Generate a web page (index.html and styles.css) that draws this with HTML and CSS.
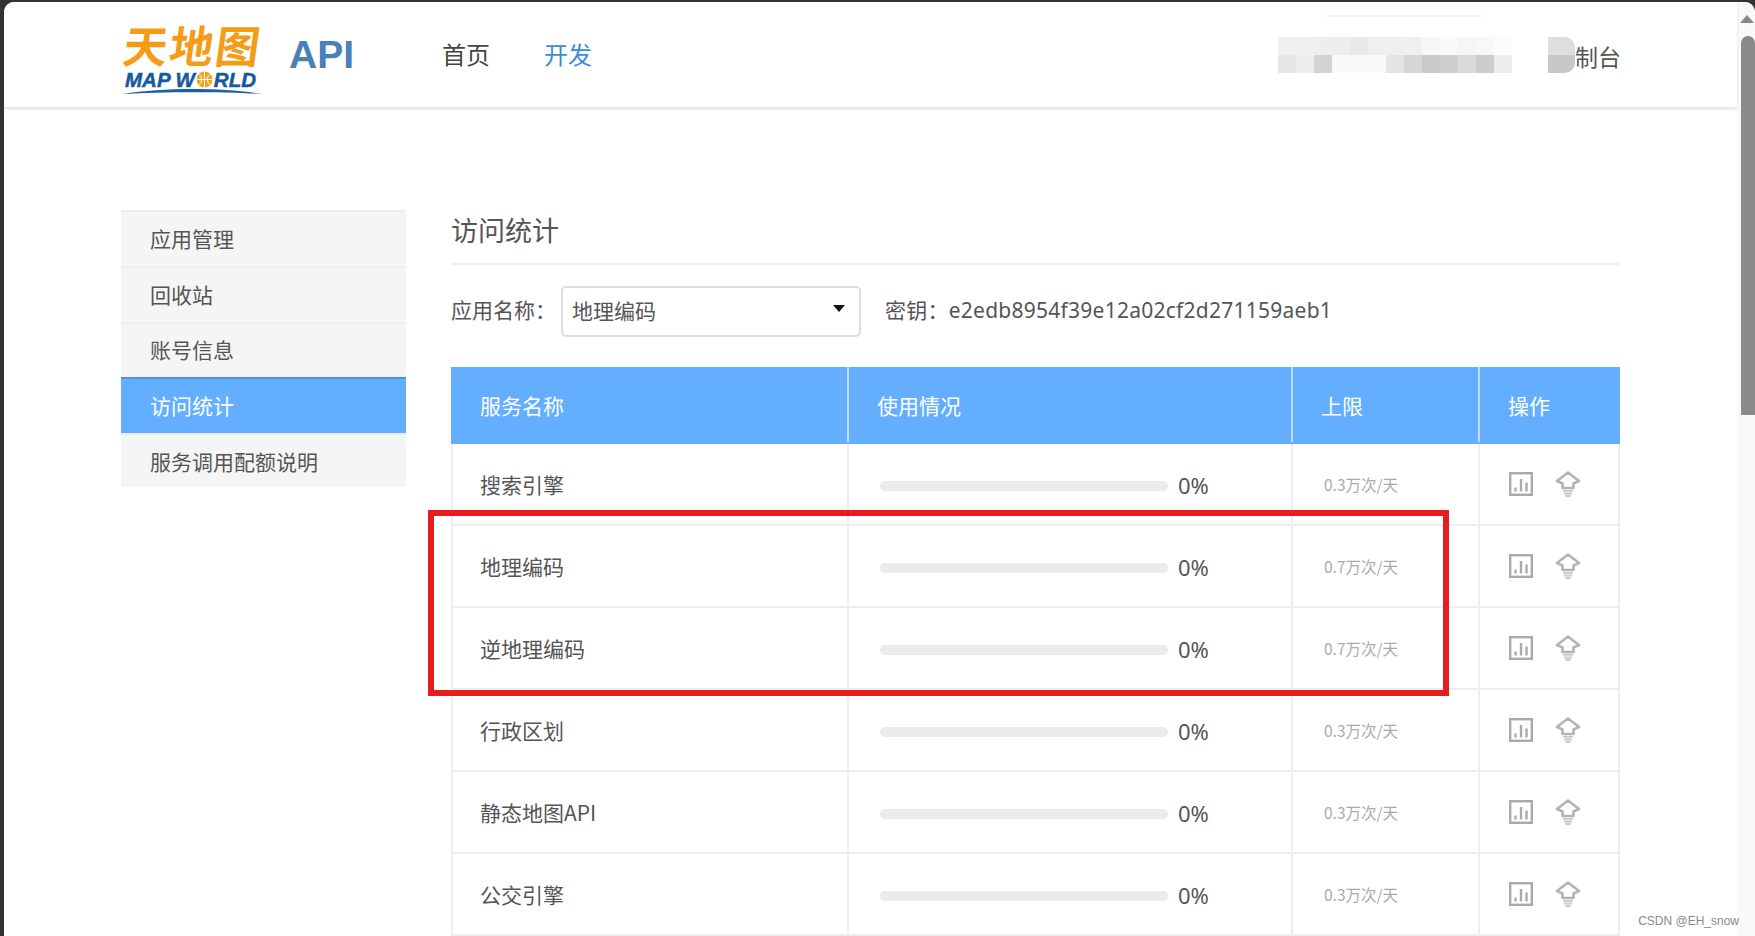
FILE: index.html
```html
<!DOCTYPE html>
<html lang="zh-CN">
<head>
<meta charset="utf-8">
<title>访问统计</title>
<link rel="stylesheet" href="styles.css">
</head>
<body>
<svg class="defs" width="0" height="0" aria-hidden="true">
  <symbol id="i-chart" viewBox="0 0 24 24">
    <rect x="1.200" y="1.200" width="21.600" height="21.600" fill="none" stroke="#aaa" stroke-width="2.400"/>
    <path d="M6.500 15.500v4M12 7v12.500M17.500 10.500v9" fill="none" stroke="#aaa" stroke-width="2.400"/>
  </symbol>
  <symbol id="i-up" viewBox="0 0 26 26">
    <path d="M13 1.500 24 10 18.500 12.500V17H7.500V12.500L2 10Z" fill="none" stroke="#b4b4b4" stroke-width="2.600" stroke-linejoin="round"/>
    <path d="M8 19.800H18M9 22.500H17M10.500 25H15.500" fill="none" stroke="#cacaca" stroke-width="1.800"/>
  </symbol>
</svg>
<div class="window">
  <div class="page">
    <header class="topbar">
      <div class="logo">
        <div class="logo-cn">天地图</div>
        <div class="logo-en">
          <span>MAP W</span>
          <svg class="globe" viewBox="0 0 16 16" aria-hidden="true">
            <circle cx="8" cy="8" r="7.500" fill="#f2a51f"/>
            <path d="M8 .5V15.500M.5 8H15.500M3 3C6 6 6 10 3 13M13 3C10 6 10 10 13 13" fill="none" stroke="#fff" stroke-width=".9"/>
          </svg>
          <span>RLD</span>
        </div>
        <svg class="swoosh" viewBox="0 0 140 6" preserveAspectRatio="none" aria-hidden="true">
          <path d="M0 6C40-2 100-2 140 6 100 3 40 3 0 6Z" fill="#1c5fa8"/>
        </svg>
      </div>
      <div class="api">API</div>
      <nav class="nav">
        <a class="nav-link">首页</a>
        <a class="nav-link nav-on">开发</a>
      </nav>
      <div class="user">
        <div class="mosaic"><div class="m-a"></div><div class="m-b"></div></div>
        <div class="mosaic-s"></div>
        <span class="console">制台</span>
      </div>
      <div class="faint"></div>
    </header>
    <main class="body">
      <aside class="side">
        <a class="side-item">应用管理</a>
        <a class="side-item">回收站</a>
        <a class="side-item">账号信息</a>
        <a class="side-item side-on">访问统计</a>
        <a class="side-item">服务调用配额说明</a>
      </aside>
      <section class="content">
        <h1 class="title">访问统计</h1>
        <div class="filter">
          <span class="f-label">应用名称：</span>
          <div class="select">地理编码<i class="caret"></i></div>
          <span class="key">密钥：e2edb8954f39e12a02cf2d271159aeb1</span>
        </div>
        <div class="table-wrap">
          <table class="stats">
            <colgroup><col class="c1"><col class="c2"><col class="c3"><col class="c4"></colgroup>
            <thead>
              <tr><th>服务名称</th><th>使用情况</th><th>上限</th><th>操作</th></tr>
            </thead>
            <tbody>
              <tr><td>搜索引擎</td><td><div class="use"><div class="bar"></div><span>0%</span></div></td><td class="lim">0.3万次/天</td><td><div class="ops"><svg class="op1"><use href="#i-chart"/></svg><svg class="op2"><use href="#i-up"/></svg></div></td></tr>
              <tr><td>地理编码</td><td><div class="use"><div class="bar"></div><span>0%</span></div></td><td class="lim">0.7万次/天</td><td><div class="ops"><svg class="op1"><use href="#i-chart"/></svg><svg class="op2"><use href="#i-up"/></svg></div></td></tr>
              <tr><td>逆地理编码</td><td><div class="use"><div class="bar"></div><span>0%</span></div></td><td class="lim">0.7万次/天</td><td><div class="ops"><svg class="op1"><use href="#i-chart"/></svg><svg class="op2"><use href="#i-up"/></svg></div></td></tr>
              <tr><td>行政区划</td><td><div class="use"><div class="bar"></div><span>0%</span></div></td><td class="lim">0.3万次/天</td><td><div class="ops"><svg class="op1"><use href="#i-chart"/></svg><svg class="op2"><use href="#i-up"/></svg></div></td></tr>
              <tr><td>静态地图API</td><td><div class="use"><div class="bar"></div><span>0%</span></div></td><td class="lim">0.3万次/天</td><td><div class="ops"><svg class="op1"><use href="#i-chart"/></svg><svg class="op2"><use href="#i-up"/></svg></div></td></tr>
              <tr><td>公交引擎</td><td><div class="use"><div class="bar"></div><span>0%</span></div></td><td class="lim">0.3万次/天</td><td><div class="ops"><svg class="op1"><use href="#i-chart"/></svg><svg class="op2"><use href="#i-up"/></svg></div></td></tr>
            </tbody>
          </table>
          <div class="redbox"></div>
        </div>
      </section>
    </main>
  </div>
  <div class="scroll">
    <i class="sc-up"></i>
    <div class="sc-thumb"></div>
  </div>
  <div class="mark">CSDN @EH_snow</div>
</div>
</body>
</html>
```
FILE: styles.css
```css
* { box-sizing: border-box; }
html, body { height: 100%; }
body {
  margin: 0;
  padding: 2px 0 0 4px;
  background: #333;
  overflow: hidden;
  font-family: "Noto Sans CJK SC", "Noto Sans", sans-serif;
  color: #555;
}
.defs { position: absolute; }
.window {
  position: relative;
  display: flex;
  height: 934px;
  background: #fff;
  border-radius: 10px 10px 0 0;
  overflow: hidden;
}
.page { flex: 1; min-width: 0; }

.topbar {
  position: relative;
  display: flex;
  align-items: center;
  height: 105px;
  padding: 0 116px 0 119px;
  background: #fff;
  box-shadow: 0 2px 3px rgba(0, 0, 0, .12);
}
.logo { width: 140px; margin-top: 4px; }
.logo-cn {
  height: 51px;
  padding-left: 1px;
  color: #f59c17;
  font-size: 44px;
  line-height: 48px;
  font-weight: 700;
  letter-spacing: 2px;
  white-space: nowrap;
  transform: skewX(-8deg);
}
.logo-en {
  display: flex;
  align-items: center;
  height: 17px;
  padding-left: 2px;
  color: #17599f;
  font: italic 700 20.500px/17px "Liberation Sans", sans-serif;
  -webkit-text-stroke: .5px #17599f;
  white-space: nowrap;
}
.globe { width: 17px; height: 17px; margin: 0 1px; }
.swoosh { display: block; width: 140px; height: 5px; margin-top: 1px; }
.api {
  margin-left: 26px;
  color: #4a80b8;
  font: 700 39px/1 "Liberation Sans", sans-serif;
}
.nav { display: flex; gap: 54px; margin: -2px 0 0 88px; }
.nav-link { font-size: 24px; color: #444; }
.nav-on { color: #3a8bd8; }
.user { display: flex; align-items: center; margin-left: auto; }
.mosaic { width: 234px; height: 36px; }
.m-a, .m-b { height: 18px; }
.m-a {
  background: linear-gradient(90deg,
    #eff0f0 0 36px, #f0eeec 36px 54px, #eceeee 54px 72px, #e9e9e7 72px 90px,
    #efefef 90px 126px, #f0f0f0 126px 144px, #f7f7f7 144px 162px, #fafafa 162px 180px,
    #f6f6f6 180px 198px, #f8f8f8 198px 216px, #fcfcfc 216px 234px);
}
.m-b {
  background: linear-gradient(90deg,
    #e7e6e4 0 18px, #eee 18px 36px, #d2d3d3 36px 54px, #fafafa 54px 108px,
    #e4e4e4 108px 126px, #d5d6d5 126px 144px, #c9cbca 144px 162px, #cecfcf 162px 180px,
    #dadada 180px 198px, #cdcdcd 198px 216px, #ededed 216px 234px);
}
.mosaic-s {
  width: 27px;
  height: 36px;
  margin-left: 36px;
  border-radius: 0 10px 10px 0;
  background: linear-gradient(#dedede 0 18px, #c8c8c8 18px 36px);
}
.console { padding-top: 3px; font-size: 23px; color: #555; line-height: 36px; white-space: nowrap; }
.faint {
  position: absolute;
  top: 13px;
  left: 1323px;
  width: 156px;
  height: 2px;
  background: #f4f4f4;
}

.body {
  display: flex;
  gap: 45px;
  padding: 103px 117px 0;
}
.side {
  flex: none;
  width: 285px;
  height: 277px;
  display: flex;
  flex-direction: column;
  background: #f5f5f5;
}
.side-item {
  flex: 1;
  display: flex;
  align-items: center;
  padding: 0 0 2px 29px;
  border-top: 2px solid #eee;
  font-size: 21px;
  color: #555;
}
.side-on {
  background: #63aeff;
  border-top-color: #4f90e2;
  color: #fff;
}
.side-item:last-child { padding-bottom: 0; }
.content { width: 1168px; }
.title {
  height: 55px;
  margin: 0;
  border-bottom: 2px solid #eee;
  font-size: 27px;
  font-weight: 400;
  line-height: 40px;
  color: #555;
}
.filter {
  display: flex;
  align-items: center;
  height: 51px;
  margin-top: 21px;
  font-size: 21px;
}
.f-label { width: 110px; white-space: nowrap; margin-top: -5px; }
.select {
  position: relative;
  width: 300px;
  height: 51px;
  padding-left: 9px;
  border: 2px solid #ddd;
  border-radius: 5px;
  line-height: 45px;
  color: #555;
}
.caret {
  position: absolute;
  top: 17px;
  right: 14px;
  border: 6px solid transparent;
  border-top: 7px solid #111;
  border-bottom: 0;
}
.key {
  margin: -5px 0 0 24px;
  font-family: "Noto Sans", "Noto Sans CJK SC", sans-serif;
  letter-spacing: .25px;
  white-space: nowrap;
  color: #555;
}
.table-wrap { position: relative; margin-top: 30px; }
.stats {
  width: 1167px;
  border-collapse: collapse;
  table-layout: fixed;
  font-size: 21px;
}
.c1 { width: 396px; }
.c2 { width: 444px; }
.c3 { width: 187px; }
.c4 { width: 140px; }
.stats th {
  height: 75px;
  padding: 0 0 2px 28px;
  background: #63aeff;
  border: 2px solid #63aeff;
  border-left-color: #c0dcf8;
  border-right-color: #c0dcf8;
  font-weight: 400;
  text-align: left;
  color: #fff;
}
.stats th:first-child { padding-left: 27px; border-left-color: #63aeff; }
.stats th:last-child { border-right-color: #63aeff; }
.stats td {
  height: 82px;
  padding: 0 0 0 27px;
  border: 2px solid #eee;
  color: #555;
}
.use { display: flex; align-items: center; padding-left: 4px; font-size: 22px; }
.bar {
  width: 288px;
  height: 10px;
  margin: 3px 10px 0 0;
  border-radius: 5px;
  background: #ebebeb;
}
.use span { font-family: "Noto Sans", sans-serif; line-height: 1; margin-top: 2px; }
.stats .lim { padding-left: 31px; font-size: 15.500px; color: #aaa; }
.ops { display: flex; align-items: center; gap: 22px; padding-left: 2px; }
.op1 { width: 24px; height: 24px; }
.op2 { width: 26px; height: 26px; }
.redbox {
  position: absolute;
  top: 143px;
  left: -23px;
  width: 1021px;
  height: 186px;
  border: 6px solid #e71c1c;
}

.scroll {
  flex: none;
  width: 18px;
  background: #f9f9f9;
  padding: 13px 0 0 4px;
}
.sc-up {
  display: block;
  width: 0;
  margin-left: -1px;
  border: 7px solid transparent;
  border-bottom: 8px solid #888;
  border-top: 0;
}
.sc-thumb {
  width: 14px;
  height: 379px;
  margin-top: 13px;
  border-radius: 7px 7px 0 0;
  background: #8a8a8a;
}
.mark {
  position: absolute;
  right: 16px;
  bottom: 7px;
  font: 12px/16px "Liberation Sans", sans-serif;
  color: #8a8a8a;
}
```
